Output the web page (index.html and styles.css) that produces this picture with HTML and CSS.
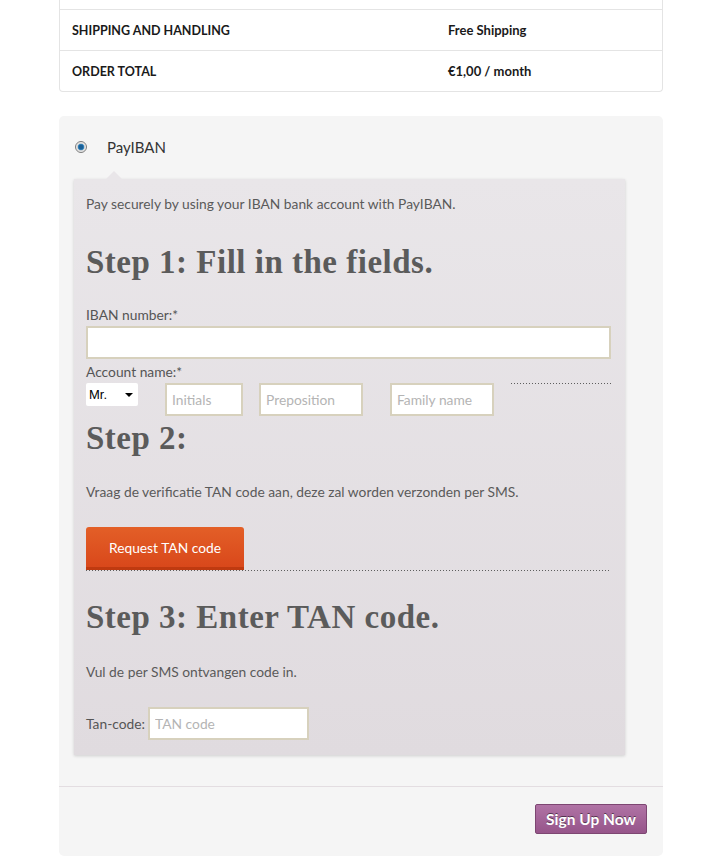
FILE: index.html
```html
<!DOCTYPE html>
<html lang="en">
<head>
<meta charset="utf-8">
<title>Checkout - PayIBAN</title>
<link rel="stylesheet" href="styles.css">
</head>
<body>
<div class="page">
  <div class="totals">
    <div class="row row-cut"></div>
    <div class="row">
      <div class="cell label">SHIPPING AND HANDLING</div>
      <div class="cell value">Free Shipping</div>
    </div>
    <div class="row">
      <div class="cell label">ORDER TOTAL</div>
      <div class="cell value">€1,00 / month</div>
    </div>
  </div>

  <div class="payment">
    <div class="method">
      <span class="radio"></span>
      <span class="method-name">PayIBAN</span>
    </div>

    <div class="paybox">
      <p class="intro">Pay securely by using your IBAN bank account with PayIBAN.</p>

      <h2 class="step step1">Step 1: Fill in the fields.</h2>
      <div class="field-label lbl-iban">IBAN number:*</div>
      <input class="text iban" type="text">
      <div class="field-label lbl-name">Account name:*</div>
      <div class="name-row">
        <div class="select-wrap"><select class="salutation"><option>Mr.</option></select></div>
        <input class="text initials" type="text" placeholder="Initials">
        <input class="text prep" type="text" placeholder="Preposition">
        <input class="text family" type="text" placeholder="Family name">
        <span class="dots short"></span>
      </div>

      <h2 class="step step2">Step 2:</h2>
      <p class="note note2">Vraag de verificatie TAN code aan, deze zal worden verzonden per SMS.</p>
      <div class="request-wrap">
        <button class="request" type="button">Request TAN code</button>
      </div>
      <div class="dots long"></div>

      <h2 class="step step3">Step 3: Enter TAN code.</h2>
      <p class="note note3">Vul de per SMS ontvangen code in.</p>
      <div class="tan-row">
        <span class="tan-label">Tan-code:</span>
        <input class="text tan" type="text" placeholder="TAN code">
      </div>
    </div>

    <div class="place-order">
      <button class="signup" type="button">Sign Up Now</button>
    </div>
  </div>
</div>
</body>
</html>
```

FILE: styles.css
```css
html, body {
  margin: 0;
  padding: 0;
  background: #ffffff;
}

body {
  font-family: "Lato", "Noto Sans", sans-serif;
  color: #555555;
}

.page {
  width: 604px;
  margin-left: 59px;
}

/* ---------- order totals ---------- */
.totals {
  border: 1px solid #e4e4e4;
  border-top: none;
  border-radius: 0 0 4px 4px;
}

.row {
  display: grid;
  grid-template-columns: 376px 1fr;
  height: 40px;
  align-items: center;
  padding-left: 12px;
  border-top: 1px solid #e4e4e4;
}

.row-cut {
  height: 9px;
  border-top: none;
}

.cell {
  font-size: 13px;
  font-weight: 700;
  color: #1a1a1a;
}

.cell.label {
  font-size: 12.5px;
}

/* ---------- payment box ---------- */
.payment {
  margin-top: 24px;
  background: #f5f5f5;
  border-radius: 5px;
  padding: 21px 0 22px;
}

.method {
  display: flex;
  align-items: center;
  height: 20px;
  padding-left: 16px;
}

.radio {
  width: 10px;
  height: 10px;
  border-radius: 50%;
  border: 1px solid #7c7c7c;
  background: radial-gradient(circle, #1a5f96 0 2px, #3f8fc6 3px, #d4d4d4 3.6px, #f0f0f0 5px);
}

.method-name {
  margin-left: 20px;
  font-size: 15px;
  color: #333333;
}

.paybox {
  position: relative;
  margin: 22px 0 0 15px;
  width: 551px;
  box-sizing: border-box;
  padding: 15px 14px 15px 12px;
  background: linear-gradient(#e9e6e9, #e0dbdf);
  box-shadow: 0 1px 3px rgba(0, 0, 0, 0.16);
  font-size: 14px;
}

.paybox::before {
  content: "";
  position: absolute;
  top: -8px;
  left: 32px;
  border-left: 8px solid transparent;
  border-right: 8px solid transparent;
  border-bottom: 8px solid #e9e6e9;
}

.intro,
.note {
  margin: 0;
  line-height: 20px;
  font-size: 13.8px;
  color: #5a5a5a;
}

.step {
  margin: 0;
  height: 40px;
  line-height: 40px;
  font-family: "Liberation Serif", "DejaVu Serif", serif;
  font-size: 33px;
  font-weight: 700;
  color: #5b5b5b;
  letter-spacing: 0.5px;
}

.step1 { margin-top: 28px; }
.step2 { margin-top: 2px; }
.step3 { margin-top: 26px; }

.field-label {
  line-height: 20px;
  font-size: 13.8px;
  color: #555555;
}

.lbl-iban { margin-top: 23px; }
.lbl-name { margin-top: 3px; }

.text {
  display: block;
  box-sizing: border-box;
  height: 33px;
  margin: 0;
  padding: 0 5px;
  border: 2px solid #d7d1bd;
  background: #ffffff;
  font-family: "Lato", "Noto Sans", sans-serif;
  font-size: 13.8px;
  color: #333333;
  outline: none;
}

.text::placeholder {
  color: #b4b4b4;
}

.iban {
  width: 100%;
  margin-top: 1px;
}

.name-row {
  display: flex;
  align-items: flex-start;
  margin-top: 1px;
  height: 33px;
}

.select-wrap {
  position: relative;
  width: 52px;
  height: 23px;
  background: #ffffff;
  border-radius: 2px;
}

.select-wrap::after {
  content: "";
  position: absolute;
  top: 10px;
  left: 39px;
  border-left: 4px solid transparent;
  border-right: 4px solid transparent;
  border-top: 4px solid #000000;
  pointer-events: none;
}

.salutation {
  appearance: none;
  -webkit-appearance: none;
  width: 100%;
  height: 23px;
  border: none;
  background: transparent;
  padding: 0 0 0 3px;
  font-family: "Liberation Sans", Arial, sans-serif;
  font-size: 13px;
  color: #000000;
  outline: none;
}

.initials { width: 78px; margin-left: 27px; }
.prep     { width: 104px; margin-left: 16px; }
.family   { width: 104px; margin-left: 27px; }

.dots {
  height: 1px;
  background: repeating-linear-gradient(to right, #5e5e5e 0 1px, transparent 1px 3px);
}

.dots.short {
  flex: 1;
  margin-left: 17px;
}

.note2 { margin-top: 24px; }
.note3 { margin-top: 25px; }

.request-wrap {
  margin-top: 25px;
}

.request {
  display: block;
  width: 158px;
  height: 43px;
  margin: 0;
  padding: 0;
  border: none;
  border-bottom: 3px solid #bf3a10;
  border-radius: 3px 3px 0 0;
  background: linear-gradient(#e35f27, #d9481b);
  color: #ffffff;
  font-family: "Lato", "Noto Sans", sans-serif;
  font-size: 13.8px;
  cursor: pointer;
}

.dots.long {
  width: 100%;
}

.tan-row {
  display: flex;
  align-items: center;
  margin-top: 25px;
}

.tan-label {
  font-size: 13.8px;
  color: #555555;
}

.tan {
  width: 161px;
  margin-left: 3px;
}

/* ---------- place order ---------- */
.place-order {
  margin-top: 31px;
  border-top: 1px solid #e3dde1;
  padding: 17px 16px 0 0;
  display: flex;
  justify-content: flex-end;
}

.signup {
  width: 112px;
  height: 30px;
  margin: 0;
  padding: 0;
  border: 1px solid #7d4672;
  border-radius: 2px;
  background: linear-gradient(#b073a5, #96558a);
  color: #ffffff;
  font-family: "Lato", "Noto Sans", sans-serif;
  font-size: 15.5px;
  font-weight: 700;
  text-shadow: 0 -1px 0 rgba(0, 0, 0, 0.5);
  cursor: pointer;
}
```
